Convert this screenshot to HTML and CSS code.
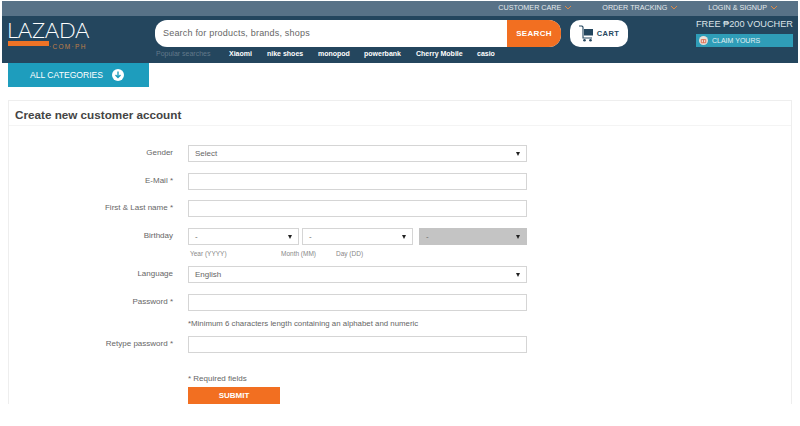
FILE: index.html
```html
<!DOCTYPE html>
<html lang="en">
<head>
<meta charset="utf-8">
<title>Create new customer account</title>
<link rel="stylesheet" href="styles.css">
</head>
<body>
<header class="site-header">
  <nav class="topbar">
    <a class="top-link">CUSTOMER CARE <svg class="chev" viewBox="0 0 8 5"><path d="M1 1l3 3 3-3" fill="none" stroke="#e08a45" stroke-width="1"/></svg></a>
    <a class="top-link">ORDER TRACKING <svg class="chev" viewBox="0 0 8 5"><path d="M1 1l3 3 3-3" fill="none" stroke="#e08a45" stroke-width="1"/></svg></a>
    <a class="top-link">LOGIN &amp; SIGNUP <svg class="chev" viewBox="0 0 8 5"><path d="M1 1l3 3 3-3" fill="none" stroke="#e08a45" stroke-width="1"/></svg></a>
  </nav>
  <div class="mainbar">
    <div class="logo">
      <div class="logo-word">LAZADA</div>
      <div class="logo-sub"><span class="logo-bar"></span><span class="logo-dom">·COM·PH</span></div>
    </div>
    <div class="search-col">
      <div class="search">
        <span class="search-text">Search for products, brands, shops</span>
        <span class="search-btn">SEARCH</span>
      </div>
      <div class="popular">
        <span class="pop-label">Popular searches</span>
        <span class="pop-item pi1">Xiaomi</span>
        <span class="pop-item pi2">nike shoes</span>
        <span class="pop-item pi3">monopod</span>
        <span class="pop-item pi4">powerbank</span>
        <span class="pop-item pi5">Cherry Mobile</span>
        <span class="pop-item">casio</span>
      </div>
    </div>
    <div class="cart">
      <svg class="cart-icon" viewBox="0 0 14 17"><path d="M0 1h3l1 1v11h9" fill="none" stroke="#24465e" stroke-width="1.1"/><path d="M5 4h9v6.500H5z" fill="#24465e"/><circle cx="5.500" cy="15.200" r="1.300" fill="#24465e"/><circle cx="11.500" cy="15.200" r="1.300" fill="#24465e"/></svg>
      <span>CART</span>
    </div>
    <div class="voucher">
      <div class="voucher-title">FREE ₱200 VOUCHER</div>
      <div class="claim"><svg class="claim-icon" viewBox="0 0 10 10"><circle cx="5" cy="5" r="5" fill="#e9dfd8"/><path d="M2.500 4h5v3.500h-5zM5 4v3.500" fill="none" stroke="#e0664a" stroke-width="1"/></svg>CLAIM YOURS</div>
    </div>
  </div>
</header>
<div class="cat-row">
  <div class="categories">ALL CATEGORIES <svg class="cat-icon" viewBox="0 0 12 12"><circle cx="6" cy="6" r="6" fill="#fff"/><path d="M6 2.500v6M3.500 6L6 8.500 8.500 6" fill="none" stroke="#1e9dbd" stroke-width="1.400"/></svg></div>
</div>
<main class="panel">
  <h1 class="panel-title">Create new customer account</h1>
  <form class="form">
    <label class="lab">Gender</label>
    <div class="field"><span>Select</span><i class="arrow"></i></div>
    <label class="lab">E-Mail *</label>
    <div class="field"></div>
    <label class="lab">First &amp; Last name *</label>
    <div class="field"></div>
    <label class="lab">Birthday</label>
    <div class="bday">
      <div class="field"><span>-</span><i class="arrow"></i></div>
      <div class="field"><span>-</span><i class="arrow"></i></div>
      <div class="field off"><span>-</span><i class="arrow"></i></div>
    </div>
    <div class="hints"><span class="h1">Year (YYYY)</span><span class="h2">Month (MM)</span><span>Day (DD)</span></div>
    <label class="lab">Language</label>
    <div class="field"><span>English</span><i class="arrow"></i></div>
    <label class="lab">Password *</label>
    <div class="field"></div>
    <div class="note">*Minimum 6 characters length containing an alphabet and numeric</div>
    <label class="lab">Retype password *</label>
    <div class="field"></div>
    <div class="req">* Required fields</div>
    <div class="submit">SUBMIT</div>
  </form>
</main>
</body>
</html>
```
FILE: styles.css
```css
* { box-sizing: border-box; }
html, body { margin: 0; padding: 0; }
body { width: 800px; height: 426px; overflow: hidden; background: #fff; font-family: "Liberation Sans", Arial, sans-serif; color: #555; padding: 1px 2px 0 2px; }
.site-header { width: 796px; }
.topbar { height: 15px; background: #587287; display: flex; justify-content: flex-end; align-items: center; padding: 0 20px 2px 0; gap: 30px; }
.top-link { font-size: 7.2px; color: #e4e9ec; display: flex; align-items: center; gap: 3px; }
.chev { width: 8px; height: 5px; }
.mainbar { height: 47px; background: #24465e; display: flex; padding: 4px 0 0 5px; }
.logo { width: 148px; color: #fff; }
.logo-word { font-family: Lato, "Liberation Sans", sans-serif; font-size: 22px; line-height: 20px; font-weight: 300; letter-spacing: -.3px; }
.logo-sub { display: flex; align-items: flex-start; height: 8px; margin-top: 1px; padding-left: 1px; }
.logo-bar { width: 41px; height: 5px; background: #ee7326; }
.logo-dom { font-size: 6.5px; line-height: 7px; margin-top: 2px; color: #c07f48; letter-spacing: 1.3px; }
.search-col { width: 406px; }
.search { height: 27px; background: #fff; border-radius: 12px; display: flex; justify-content: space-between; overflow: hidden; }
.search-text { font-size: 9px; color: #666; letter-spacing: .2px; line-height: 27px; padding-left: 8px; }
.search-btn { width: 54px; background: #f26f21; color: #fff; font-size: 8px; font-weight: 700; text-align: center; line-height: 27px; letter-spacing: .3px; }
.popular { display: flex; font-size: 7px; color: #fff; margin-top: 2px; line-height: 9px; font-weight: 700; }
.pop-label { color: #62798a; font-weight: 400; width: 73px; margin-left: 1px; }
.pop-item { white-space: nowrap; }
.pi1 { width: 38px; } .pi2 { width: 51px; } .pi3 { width: 46px; } .pi4 { width: 52px; } .pi5 { width: 61px; }
.cart { margin-left: 9px; width: 58px; height: 27px; background: #fff; border-radius: 10px; display: flex; align-items: center; justify-content: center; gap: 4px; font-size: 7.5px; font-weight: 700; color: #24465e; letter-spacing: .4px; }
.cart-icon { width: 14px; height: 17px; }
.voucher { margin-left: 68px; color: #dbe3e8; }
.voucher-title { font-size: 9.2px; line-height: 13px; white-space: nowrap; margin-top: -2px; }
.claim { width: 97px; height: 13px; margin-top: 3px; background: #2f9db8; font-size: 7px; display: flex; align-items: center; gap: 4px; padding-left: 3px; color: #e2f0f3; }
.claim-icon { width: 9px; height: 9px; }
.cat-row { padding-left: 6px; }
.categories { width: 141px; height: 24px; background: #1e9dbd; color: #fff; font-size: 8.6px; display: flex; align-items: center; padding: 0 0 1px 22px; gap: 9px; }
.cat-icon { width: 12px; height: 12px; }
.panel { margin: 13px 0 0 6px; width: 784px; height: 304px; border: 1px solid #eee; border-bottom: 0; }
.panel-title { font-size: 11.7px; font-weight: 700; color: #444; margin: 0; padding: 7px 6px 0; height: 25px; border-bottom: 1px solid #f4f4f4; }
.form { display: grid; grid-template-columns: 164px 339px; column-gap: 15px; grid-template-rows: 28px 27px 28px 17px 21px 28px 17px 25px 38px 13px 17px; margin-top: 19px; font-size: 8px; align-items: start; }
.lab { grid-column: 1; text-align: right; color: #666; line-height: 16px; }
.field, .hints, .note, .req, .submit, .bday { grid-column: 2; }
.field { height: 17px; border: 1px solid #d5d5d5; background: #fff; display: flex; align-items: center; justify-content: space-between; padding: 0 6px; color: #666; }
.bday { display: flex; gap: 3px; }
.bday .field { width: 111px; }
.bday .off { width: 108px; margin-left: 3px; background: #c4c4c4; border-color: #c4c4c4; }
.arrow { width: 0; height: 0; border-left: 2px solid transparent; border-right: 2px solid transparent; border-top: 4px solid #222; }
.hints { font-size: 6.5px; color: #888; display: flex; padding: 5px 0 0 2px; }
.h1 { width: 91px; } .h2 { width: 55px; }
.note { font-size: 7.85px; color: #666; padding-top: 8px; }
.req { color: #666; line-height: 10px; }
.submit { width: 92px; height: 17px; background: #f26f21; color: #fff; font-weight: 700; text-align: center; line-height: 17px; }
```
